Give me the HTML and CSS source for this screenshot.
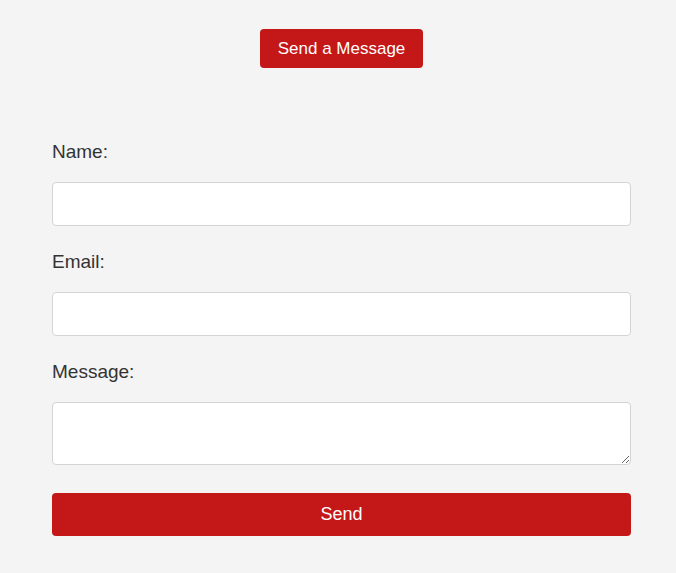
FILE: index.html
```html
<!DOCTYPE html>
<html lang="en">
<head>
    <meta charset="UTF-8">
    <title>Contact</title>
    <link rel="stylesheet" href="styles.css">
</head>
<body>
    <div class="top">
        <button class="open-btn" type="button">Send a Message</button>
    </div>

    <form class="contact-form">
        <div class="field">
            <label for="name">Name:</label>
            <input type="text" id="name">
        </div>
        <div class="field">
            <label for="email">Email:</label>
            <input type="email" id="email">
        </div>
        <div class="field">
            <label for="msg">Message:</label>
            <textarea id="msg"></textarea>
        </div>
        <button class="send-btn" type="submit">Send</button>
    </form>
</body>
</html>
```

FILE: styles.css
```css
html, body {
  margin: 0;
  background: #f4f4f4;
}

body {
  font-family: "Liberation Sans", Arial, sans-serif;
  color: #333;
  padding: 29px 45px 0 52px;
}

.top {
  text-align: center;
}

.open-btn {
  font-family: inherit;
  font-size: 17px;
  line-height: 21px;
  color: #fff;
  background: #c41718;
  border: none;
  border-radius: 4px;
  padding: 9px 18px;
  cursor: pointer;
}

.contact-form {
  margin-top: 73px;
}

.field {
  margin-bottom: 25px;
}

.field label {
  display: block;
  font-size: 19px;
  line-height: 21px;
  margin-bottom: 20px;
}

.field input,
.field textarea {
  display: block;
  box-sizing: border-box;
  width: 100%;
  margin: 0;
  border: 1px solid #d4d4d4;
  border-radius: 4px;
  background: #fff;
  font-family: inherit;
  font-size: 16px;
}

.field input {
  height: 44px;
}

.field textarea {
  height: 63px;
}

.send-btn {
  display: block;
  width: 100%;
  height: 43px;
  margin-top: 28px;
  font-family: inherit;
  font-size: 18px;
  color: #fff;
  background: #c41718;
  border: none;
  border-radius: 4px;
  cursor: pointer;
}
```
